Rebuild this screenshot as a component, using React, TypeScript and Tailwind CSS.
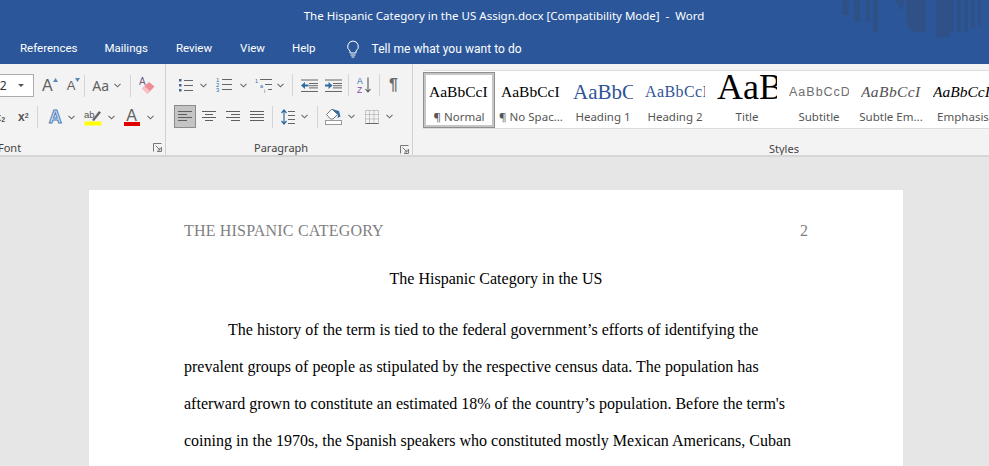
const ui = "font-['Noto_Sans',sans-serif]";

const tabs = [
  { label: "References", cls: "ml-[20px]" },
  { label: "Mailings", cls: "ml-[27px]" },
  { label: "Review", cls: "ml-[28px]" },
  { label: "View", cls: "ml-[28px]" },
  { label: "Help", cls: "ml-[27px]" },
];

const styleItems = [
  { label: "¶ Normal", sample: "AaBbCcI", cls: "mb-[2px] text-[15.5px] leading-[24px] text-black font-['Liberation_Serif',serif]", active: true },
  { label: "¶ No Spac...", sample: "AaBbCcI", cls: "mb-[2px] text-[15.5px] leading-[24px] text-black font-['Liberation_Serif',serif]" },
  { label: "Heading 1", sample: "AaBbCcI", cls: "mb-[2px] text-[21px] leading-[24px] text-[#2f5496] font-['Liberation_Serif',serif]" },
  { label: "Heading 2", sample: "AaBbCcI", cls: "mb-[2px] text-[16px] leading-[24px] tracking-[0.4px] text-[#2f5496] font-['Liberation_Serif',serif]" },
  { label: "Title", sample: "AaBbC", cls: "mb-[3px] text-[36px] leading-[32px] text-black font-['Liberation_Serif',serif]" },
  { label: "Subtitle", sample: "AaBbCcD", cls: "mb-[2px] text-[12.5px] leading-[24px] tracking-[1px] text-[#6e6e6e] font-['Liberation_Sans',sans-serif]" },
  { label: "Subtle Em...", sample: "AaBbCcI", cls: "mb-[2px] text-[15.5px] leading-[24px] tracking-[0.4px] italic text-[#505050] font-['Liberation_Serif',serif]" },
  { label: "Emphasis", sample: "AaBbCcI", cls: "mb-[2px] text-[15.5px] leading-[24px] italic text-black font-['Liberation_Serif',serif]" },
];

const bodyLines = [
  "The history of the term is tied to the federal government’s efforts of identifying the",
  "prevalent groups of people as stipulated by the respective census data. The population has",
  "afterward grown to constitute an estimated 18% of the country’s population. Before the term's",
  "coining in the 1970s, the Spanish speakers who constituted mostly Mexican Americans, Cuban",
];

function Chevron({ className = "" }: { className?: string }) {
  return (
    <svg width="7" height="5" viewBox="0 0 7 5" className={className}>
      <path d="M0.5 0.8 L3.5 3.8 L6.5 0.8" fill="none" stroke="#6a6a6a" strokeWidth="1.1" />
    </svg>
  );
}

function Sep({ className = "" }: { className?: string }) {
  return <div className={`w-px h-[22px] bg-[#d4d4d4] ${className}`} />;
}

function Launcher() {
  return (
    <svg width="9" height="9" viewBox="0 0 9 9">
      <path d="M0.5 8.5 V0.5 H8.5 M8.5 4 V8.5 H4 M2.5 2.5 L7 7 M7 4.5 V7 H4.5" fill="none" stroke="#777" strokeWidth="1" />
    </svg>
  );
}

function Lines({ rows, className = "" }: { rows: [number, number][]; className?: string }) {
  return (
    <svg width="14" height="13" viewBox="0 0 14 13" className={className}>
      {rows.map(([x, w], i) => (
        <rect key={i} x={x} y={1 + i * 3} width={w} height="1" fill="#5f5f5f" />
      ))}
    </svg>
  );
}

function Bullets() {
  return (
    <svg width="14" height="15" viewBox="0 0 14 15" className="ml-[13px]">
      {[2, 7, 12].map((y) => (
        <g key={y}>
          <rect x="0" y={y - 1} width="2.5" height="2.5" fill="#44678f" />
          <rect x="5" y={y} width="9" height="1" fill="#666" />
        </g>
      ))}
    </svg>
  );
}

function Numbering() {
  return (
    <svg width="16" height="16" viewBox="0 0 16 16" className="ml-[9px]">
      {[4, 9, 14].map((y, i) => (
        <g key={y}>
          <text x="0" y={y + 1} fontSize="6" fill="#2e6da4" className="font-['Liberation_Sans',sans-serif]">{i + 1}</text>
          <rect x="6" y={y - 2} width="10" height="1" fill="#666" />
        </g>
      ))}
    </svg>
  );
}

function Multilevel() {
  return (
    <svg width="18" height="16" viewBox="0 0 18 16" className="ml-[8px]">
      <text x="0" y="6" fontSize="5.5" fill="#2e6da4" className="font-['Liberation_Sans',sans-serif]">1</text>
      <rect x="5" y="2" width="12" height="1" fill="#666" />
      <text x="5" y="11" fontSize="5.5" fill="#2e6da4" className="font-['Liberation_Sans',sans-serif]">a</text>
      <rect x="10" y="7" width="7" height="1" fill="#666" />
      <text x="9" y="16" fontSize="5.5" fill="#666" className="font-['Liberation_Sans',sans-serif]">i</text>
      <rect x="13" y="12" width="4" height="1" fill="#666" />
    </svg>
  );
}

function Indent({ flip = false, className = "" }: { flip?: boolean; className?: string }) {
  return (
    <svg width="17" height="13" viewBox="0 0 17 13" className={className}>
      {[0.5, 12].map((y) => (
        <rect key={y} x="0" y={y} width="17" height="1" fill="#666" />
      ))}
      {[4, 6.2, 8.4].map((y) => (
        <rect key={y} x="8" y={y} width="9" height="1" fill="#666" />
      ))}
      {flip ? (
        <path d="M0 5.5 H3.5 V3 L7.5 6.5 L3.5 10 V7.5 H0 Z" fill="#2e6da4" />
      ) : (
        <path d="M7.5 5.5 H4 V3 L0 6.5 L4 10 V7.5 H7.5 Z" fill="#2e6da4" />
      )}
    </svg>
  );
}

function Sort() {
  return (
    <svg width="15" height="16" viewBox="0 0 15 16" className="ml-[8px]">
      <text x="0" y="7" fontSize="8.5" fill="#2e6da4" className="font-['Liberation_Sans',sans-serif]">A</text>
      <text x="0" y="15.5" fontSize="8.5" fill="#8e4a9e" className="font-['Liberation_Sans',sans-serif]">Z</text>
      <path d="M11 0.5 V15 M8.5 12 L11 15 L13.5 12" fill="none" stroke="#555" strokeWidth="1.1" />
    </svg>
  );
}

function LineSpacing() {
  return (
    <svg width="14" height="16" viewBox="0 0 14 16" className="ml-[8px]">
      <path d="M3 1 V15 M0.5 4 L3 1 L5.5 4 M0.5 12 L3 15 L5.5 12" fill="none" stroke="#2e6da4" strokeWidth="1.2" />
      {[2, 6, 10, 14].map((y) => (
        <rect key={y} x="7" y={y} width="7" height="1" fill="#666" />
      ))}
    </svg>
  );
}

function Shading() {
  return (
    <svg width="17" height="17" viewBox="0 0 17 17" className="ml-[7px]">
      <path d="M1.5 6.5 L7 1 L12.5 6.5 L8 11 H5.5 Z" fill="#fff" stroke="#777" strokeWidth="1" />
      <path d="M7 1 L14 3 L15.5 8.5 L12.5 10 L13 6.5 Z" fill="#2e6da4" />
      <rect x="0.5" y="12.5" width="16" height="4" fill="#fff" stroke="#999" />
    </svg>
  );
}

function Borders() {
  return (
    <svg width="14" height="14" viewBox="0 0 14 14" className="ml-[10px]">
      <path d="M0.5 0.5 H13.5 V13.5 H0.5 Z M4.5 0.5 V13.5 M9 0.5 V13.5 M0.5 4.5 H13.5 M0.5 9 H13.5" fill="none" stroke="#9a9a9a" strokeWidth="1" strokeDasharray="1 1" />
      <path d="M0.5 13.5 H13.5" stroke="#666" strokeWidth="1" />
    </svg>
  );
}

function Eraser() {
  return (
    <svg width="16" height="18" viewBox="0 0 16 18" className="ml-[8px]">
      <path d="M3 11.5 L10 5 L15.5 9.5 L8.5 17 Z" fill="#ee8c95" />
      <path d="M3 11.5 L5.5 9.2 L11 14 L8.5 17 Z" fill="#f6c3c8" />
      <text x="0" y="8" fontSize="10" fill="#6f5a80" className="font-['Liberation_Sans',sans-serif]">A</text>
    </svg>
  );
}

function Highlight() {
  return (
    <svg width="18" height="17" viewBox="0 0 18 17" className="ml-[9px]">
      <text x="0" y="9" fontSize="9.5" fill="#555" className="font-['Liberation_Sans',sans-serif]">ab</text>
      <path d="M8 11 L15 2 L17 3.5 L10 12 Z" fill="#666" />
      <rect x="0.5" y="12.5" width="17" height="4" fill="#ffff00" />
    </svg>
  );
}

function FontColor() {
  return (
    <div className="ml-[9px] relative w-[16px] h-[17px] flex flex-col items-center">
      <span className="text-[16px] leading-[14px] text-[#5f5f5f] font-['Liberation_Sans',sans-serif]">A</span>
      <div className="w-[16px] h-[4px] mt-[-1px] bg-[#e00000]" />
    </div>
  );
}

function GrowA({ up, className = "" }: { up: boolean; className?: string }) {
  return (
    <div className={`relative flex items-end ${className}`}>
      <span className={`${up ? "text-[16px]" : "text-[13px]"} leading-[16px] text-[#5f5f5f] font-['Liberation_Sans',sans-serif]`}>A</span>
      <svg width="5" height="4" viewBox="0 0 5 4" className="absolute right-[-5px] top-[0px]">
        <path d={up ? "M0 4 L2.5 0 L5 4 Z" : "M0 0 L2.5 4 L5 0 Z"} fill="#5b86b5" />
      </svg>
    </div>
  );
}

function FontGroup() {
  return (
    <div className="w-[165px] shrink-0 flex flex-col overflow-hidden">
      <div className="flex items-center h-[23px] mt-[10px]">
        <div className="w-[34px] h-[23px] shrink-0 bg-white border border-l-0 border-[#ababab] flex items-center overflow-hidden">
          <span className="text-[12px] leading-none text-[#333] ml-[-7px]">12</span>
          <div className="w-0 h-0 ml-[11px] border-x-[3px] border-t-[3px] border-x-transparent border-t-[#555]" />
        </div>
        <GrowA up className="ml-[8px]" />
        <GrowA up={false} className="ml-[14px]" />
        <Sep className="ml-[9px]" />
        <span className="ml-[7px] text-[14px] leading-none text-[#5f5f5f]">Aa</span>
        <Chevron className="ml-[5px]" />
        <Sep className="ml-[9px]" />
        <Eraser />
      </div>
      <div className="flex items-center h-[23px] mt-[9px]">
        <span className="ml-[-5px] text-[11px] leading-none font-bold text-[#555] font-['Liberation_Sans',sans-serif]">x<sub className="text-[7px]">2</sub></span>
        <span className="ml-[13px] text-[12px] leading-none font-bold text-[#555] font-['Liberation_Sans',sans-serif]">x<sup className="text-[7px]">2</sup></span>
        <Sep className="ml-[8px]" />
        <span className="ml-[11px] w-[15px] text-[18px] leading-none font-bold text-[#cfe0f2] [-webkit-text-stroke:1px_#4f81bd] font-['Liberation_Sans',sans-serif]">A</span>
        <Chevron className="ml-[4px]" />
        <Highlight />
        <Chevron className="ml-[6px]" />
        <FontColor />
        <Chevron className="ml-[7px]" />
      </div>
      <div className="flex items-center justify-between h-[17px] mt-[12px] pr-[3px]">
        <span className="ml-[-2px] text-[11px] leading-none text-[#444]">Font</span>
        <Launcher />
      </div>
    </div>
  );
}

function ParagraphGroup() {
  return (
    <div className="w-[247px] shrink-0 flex flex-col border-l border-[#d0d0d0]">
      <div className="flex items-center h-[23px] mt-[10px]">
        <Bullets />
        <Chevron className="ml-[7px]" />
        <Numbering />
        <Chevron className="ml-[8px]" />
        <Multilevel />
        <Chevron className="ml-[4px]" />
        <Sep className="ml-[8px]" />
        <Indent className="ml-[8px]" />
        <Indent flip className="ml-[7px]" />
        <Sep className="ml-[6px]" />
        <Sort />
        <Sep className="ml-[7px]" />
        <span className="ml-[9px] text-[16px] leading-none font-bold text-[#6a6a6a] font-['Liberation_Sans',sans-serif]">¶</span>
      </div>
      <div className="flex items-center h-[23px] mt-[9px]">
        <div className="ml-[8px] w-[22px] h-[23px] bg-[#c4c4c4] border border-[#8c8c8c] flex items-center justify-center">
          <Lines rows={[[0, 14], [0, 9], [0, 14], [0, 9]]} />
        </div>
        <Lines rows={[[0, 14], [3, 8], [0, 14], [3, 8]]} className="ml-[6px]" />
        <Lines rows={[[0, 14], [5, 9], [0, 14], [5, 9]]} className="ml-[10px]" />
        <Lines rows={[[0, 14], [0, 14], [0, 14], [0, 14]]} className="ml-[10px]" />
        <Sep className="ml-[8px]" />
        <LineSpacing />
        <Chevron className="ml-[6px]" />
        <Sep className="ml-[9px]" />
        <Shading />
        <Chevron className="ml-[6px]" />
        <Borders />
        <Chevron className="ml-[7px]" />
      </div>
      <div className="relative flex items-center h-[17px] mt-[12px]">
        <span className="ml-[88px] text-[11px] leading-none text-[#444]">Paragraph</span>
        <div className="absolute right-[3px] top-[5px]">
          <Launcher />
        </div>
      </div>
    </div>
  );
}

function StylesGroup() {
  return (
    <div className="flex-1 min-w-0 flex flex-col border-l border-[#d0d0d0] overflow-hidden">
      <div className="ml-[10px] mt-[6px] h-[59px] w-[590px] shrink-0 bg-white border-y border-[#dcdcdc] flex items-center">
        {styleItems.map((item) => (
          <div
            key={item.label}
            className={`w-[72px] h-[56px] shrink-0 flex flex-col items-center ${
              item.active ? "border-[3px] border-[#c6c6c6] outline outline-[#8f8f8f] -outline-offset-1" : ""
            }`}
          >
            <div className={`w-[60px] h-[32px] overflow-hidden flex items-end ${item.active ? "-mt-[1px]" : "mt-[2px]"}`}>
              <span className={`whitespace-nowrap ${item.cls}`}>{item.sample}</span>
            </div>
            <span className="mt-[4px] text-[11.5px] leading-[14px] text-[#555] whitespace-nowrap">{item.label}</span>
          </div>
        ))}
      </div>
      <div className="h-[17px] mt-[12px] flex items-center">
        <span className="ml-[356px] text-[11px] leading-none text-[#444]">Styles</span>
      </div>
    </div>
  );
}

export default function App() {
  return (
    <div className={`w-full h-screen flex flex-col overflow-hidden bg-[#e6e6e6] ${ui}`}>
      {/* Title bar + tabs */}
      <div className="relative h-[64px] shrink-0 bg-[#2b579a] text-white">
        <svg width="147" height="40" viewBox="0 0 147 40" className="absolute right-0 top-0">
          <g fill="#2f5187">
            <rect x="0" y="0" width="7" height="15" />
            <rect x="12" y="0" width="6" height="22" />
            <rect x="24" y="0" width="4" height="22" />
            <rect x="31" y="0" width="5" height="32" />
            <path d="M53 0 L60 12 L62 0 Z" />
            <path d="M64 0 H84 V32 H72 Q64 28 64 20 Z" />
            <rect x="94" y="0" width="14" height="37" />
            <rect x="108" y="0" width="4" height="32" />
            <rect x="115" y="0" width="4" height="32" />
            <rect x="122" y="0" width="4" height="32" />
            <rect x="129" y="0" width="4" height="28" />
            <rect x="136" y="0" width="3" height="26" />
          </g>
        </svg>
        <div className="relative h-[32px] flex items-center justify-center text-[11.5px] pl-[19px]">
          The Hispanic Category in the US Assign.docx [Compatibility Mode]&nbsp; -&nbsp; Word
        </div>
        <div className="relative h-[32px] pt-[1px] flex items-center text-[11.5px] font-['Roboto',sans-serif]">
          {tabs.map((t) => (
            <span key={t.label} className={t.cls}>{t.label}</span>
          ))}
          <svg width="14" height="18" viewBox="0 0 14 18" className="ml-[30px]">
            <path d="M7 1 A5.5 5.5 0 0 1 10 11 V13 H4 V11 A5.5 5.5 0 0 1 7 1 Z M4.5 15 H9.5 M5.5 17 H8.5" fill="none" stroke="#fff" strokeWidth="1" />
          </svg>
          <span className="ml-[12px] text-[12px] tracking-[0.04px]">Tell me what you want to do</span>
        </div>
      </div>

      {/* Ribbon */}
      <div className="h-[93px] shrink-0 flex bg-[#f3f3f3] border-b-2 border-[#d6d6d6]">
        <FontGroup />
        <ParagraphGroup />
        <StylesGroup />
      </div>

      {/* Document */}
      <div className="flex-1 min-h-0 pt-[33px] pl-[89px] overflow-hidden">
        <div className="w-[814px] h-[400px] bg-white px-[95px] pt-[29px] font-['Liberation_Serif',serif] text-[16px] text-black">
          <div className="flex justify-between text-[#7f7f7f] leading-[24px]">
            <span className="tracking-[0.19px]">THE HISPANIC CATEGORY</span>
            <span>2</span>
          </div>
          <p className="mt-[24px] text-center leading-[24px]">The Hispanic Category in the US</p>
          <div className="mt-[20px] leading-[37px] whitespace-nowrap">
            {bodyLines.map((line, i) => (
              <p key={i} className={i === 0 ? "indent-[44px]" : ""}>{line}</p>
            ))}
          </div>
        </div>
      </div>
    </div>
  );
}
